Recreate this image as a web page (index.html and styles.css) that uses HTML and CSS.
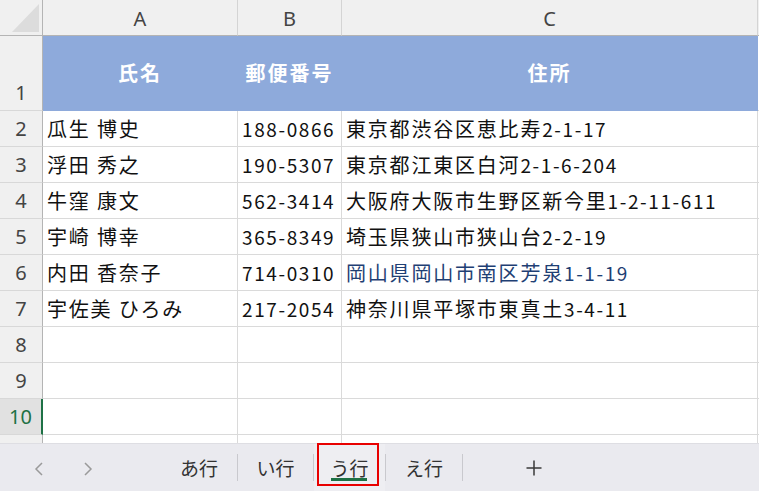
FILE: index.html
```html
<!DOCTYPE html>
<html lang="ja">
<head>
<meta charset="utf-8">
<title>Sheet</title>
<link rel="stylesheet" href="styles.css">
</head>
<body>
<div class="app">
  <div class="sheet">
    <div class="grid">
      <div class="corner"><svg width="43" height="36" viewBox="0 0 43 36"><polygon points="12,32 39,32 39,4" fill="#dcdcdc"/></svg></div>
      <div class="colhead">A</div>
      <div class="colhead">B</div>
      <div class="colhead">C</div>
      <div class="colhead"></div>

      <div class="rowhead first">1</div>
      <div class="cell th">氏名</div>
      <div class="cell th">郵便番号</div>
      <div class="cell th">住所</div>
      <div class="cell"></div>

      <div class="rowhead">2</div>
      <div class="cell">瓜生 博史</div>
      <div class="cell"><span class="num">188-0866</span></div>
      <div class="cell">東京都渋谷区恵比寿<span class="num">2-1-17</span></div>
      <div class="cell"></div>

      <div class="rowhead">3</div>
      <div class="cell">浮田 秀之</div>
      <div class="cell"><span class="num">190-5307</span></div>
      <div class="cell">東京都江東区白河<span class="num">2-1-6-204</span></div>
      <div class="cell"></div>

      <div class="rowhead">4</div>
      <div class="cell">牛窪 康文</div>
      <div class="cell"><span class="num">562-3414</span></div>
      <div class="cell">大阪府大阪市生野区新今里<span class="num">1-2-11-611</span></div>
      <div class="cell"></div>

      <div class="rowhead">5</div>
      <div class="cell">宇崎 博幸</div>
      <div class="cell"><span class="num">365-8349</span></div>
      <div class="cell">埼玉県狭山市狭山台<span class="num">2-2-19</span></div>
      <div class="cell"></div>

      <div class="rowhead">6</div>
      <div class="cell">内田 香奈子</div>
      <div class="cell"><span class="num">714-0310</span></div>
      <div class="cell blue">岡山県岡山市南区芳泉<span class="num">1-1-19</span></div>
      <div class="cell"></div>

      <div class="rowhead">7</div>
      <div class="cell">宇佐美 ひろみ</div>
      <div class="cell"><span class="num">217-2054</span></div>
      <div class="cell">神奈川県平塚市東真土<span class="num">3-4-11</span></div>
      <div class="cell"></div>

      <div class="rowhead">8</div>
      <div class="cell"></div><div class="cell"></div><div class="cell"></div><div class="cell"></div>

      <div class="rowhead">9</div>
      <div class="cell"></div><div class="cell"></div><div class="cell"></div><div class="cell"></div>

      <div class="rowhead active">10</div>
      <div class="cell"></div><div class="cell"></div><div class="cell"></div><div class="cell"></div>

      <div class="rowhead"></div>
      <div class="cell"></div><div class="cell"></div><div class="cell"></div><div class="cell"></div>
    </div>
  </div>

  <div class="tabbar">
    <div class="nav">
      <svg class="arrow" width="10" height="14" viewBox="0 0 10 14"><polyline points="8,1 2,7 8,13" fill="none" stroke="#9a9a9a" stroke-width="1.5"/></svg>
      <svg class="arrow" width="10" height="14" viewBox="0 0 10 14"><polyline points="2,1 8,7 2,13" fill="none" stroke="#9a9a9a" stroke-width="1.5"/></svg>
    </div>
    <div class="tab t1">あ行</div>
    <span class="sep"></span>
    <div class="tab t2">い行</div>
    <span class="sep"></span>
    <div class="tab t3 selected">う行<span class="underline"></span><span class="highlight"></span></div>
    <span class="sep"></span>
    <div class="tab t4">え行</div>
    <span class="sep"></span>
    <div class="add"><svg width="18" height="18" viewBox="0 0 18 18"><path d="M9 1.5V16.5M1.5 9H16.5" stroke="#3a3a3a" stroke-width="1.5" fill="none"/></svg></div>
  </div>
</div>
</body>
</html>
```

FILE: styles.css
```css
* { box-sizing: border-box; }
html, body { margin: 0; padding: 0; }
body {
  width: 759px;
  height: 491px;
  overflow: hidden;
  background: #ffffff;
  font-family: "Noto Sans CJK JP", sans-serif;
}
.app {
  display: flex;
  flex-direction: column;
  height: 491px;
}
.sheet {
  height: 443px;
  overflow: hidden;
  flex: none;
}
.grid {
  display: grid;
  grid-template-columns: 43px 195px 104px 416px 1fr;
  grid-template-rows: 36px 75px repeat(10, 36px);
}
.corner {
  background: #f0f0f0;
  border-right: 1px solid #b4b4b4;
  border-bottom: 1px solid #b4b4b4;
}
.corner svg { display: block; }
.colhead {
  background: #f0f0f0;
  border-right: 1px solid #d4d4d4;
  border-bottom: 1px solid #b4b4b4;
  display: flex;
  align-items: center;
  justify-content: center;
  font-family: "Noto Sans", sans-serif;
  font-size: 20px;
  color: #444444;
  padding-top: 1px;
}
.rowhead {
  background: #f0f0f0;
  border-right: 1px solid #b4b4b4;
  border-bottom: 1px solid #d8d8d8;
  display: flex;
  align-items: center;
  justify-content: center;
  font-family: "Noto Sans", sans-serif;
  font-size: 20px;
  color: #444444;
}
.rowhead.first { align-items: flex-end; padding-bottom: 4px; }
.rowhead.active {
  background: #e1e1e1;
  color: #1e7145;
  border-right: 2px solid #1e7145;
}
.cell {
  border-right: 1px solid #dadada;
  border-bottom: 1px solid #dadada;
  display: flex;
  align-items: center;
  padding-left: 4px;
  font-size: 20px;
  letter-spacing: 1.8px;
  color: #111111;
  white-space: nowrap;
  overflow: hidden;
}
.cell.th {
  background: #8eaadb;
  border-right-color: #8eaadb;
  border-bottom-color: #8eaadb;
  color: #ffffff;
  font-weight: bold;
  justify-content: center;
  padding-left: 0;
  letter-spacing: 2px;
  padding-bottom: 2px;
}
.cell.blue { color: #1f3f74; }
.num {
  font-size: 19px;
  letter-spacing: 1.6px;
}

.tabbar {
  flex: 1;
  background: #eaeaef;
  border-top: 1px solid #dedee3;
  display: flex;
  align-items: center;
  font-family: "Noto Sans CJK JP", sans-serif;
  font-size: 19px;
  color: #333333;
}
.nav {
  width: 161px;
  flex: none;
  display: flex;
  align-items: center;
  padding-left: 34px;
  gap: 39px;
  padding-top: 2px;
}
.arrow { display: block; }
.tab {
  position: relative;
  height: 47px;
  display: flex;
  align-items: center;
  justify-content: center;
  flex: none;
  padding-bottom: 1px;
}
.t1 { width: 76px; }
.t2 { width: 75px; }
.t3 { width: 71px; }
.t4 { width: 76px; }
.sep {
  width: 1px;
  height: 27px;
  background: #c9c9ce;
  flex: none;
}
.selected { background: #eeeef2; }
.underline {
  position: absolute;
  left: 17px;
  top: 34px;
  width: 36px;
  height: 3px;
  background: #1e7145;
}
.highlight {
  position: absolute;
  left: 3px;
  top: -1px;
  width: 62px;
  height: 43px;
  border: 2px solid #e80000;
}
.add {
  margin-left: 62px;
  display: flex;
  align-items: center;
  padding-top: 1px;
}
.add svg { display: block; }
```
